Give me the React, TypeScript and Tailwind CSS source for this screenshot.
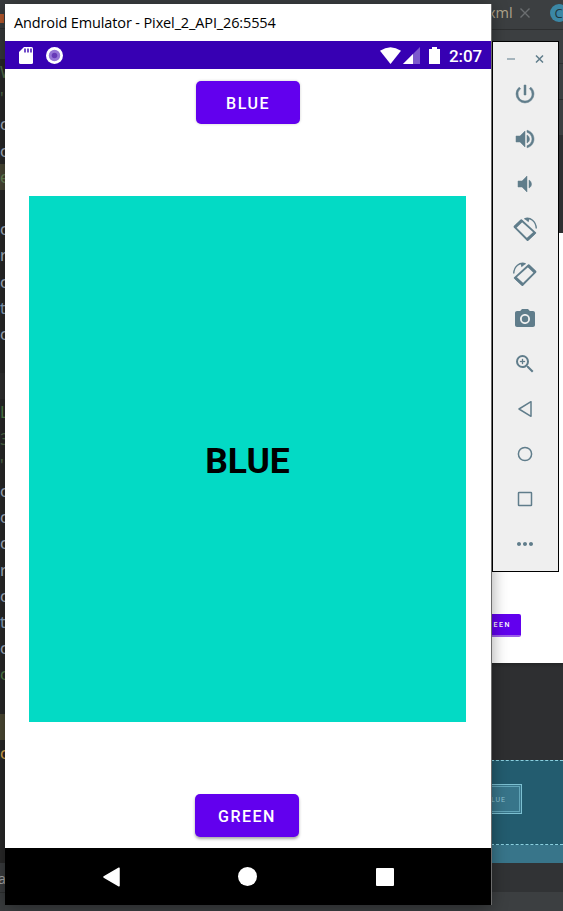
import type { ReactNode } from "react";
import {
  MdPowerSettingsNew,
  MdVolumeUp,
  MdVolumeDown,
  MdPhotoCamera,
  MdZoomIn,
  MdMoreHoriz,
} from "react-icons/md";

const codeRows: { text: string; className: string }[] = [
  { text: "W", className: "text-[#54704a]" },
  { text: "'", className: "text-[#54704a]" },
  { text: "c", className: "text-[#a9b7c6]" },
  { text: "c", className: "text-[#a9b7c6]" },
  { text: "e", className: "bg-[#4a4836] text-[#6a8759]" },
  { text: "", className: "" },
  { text: "c", className: "text-[#a9b7c6]" },
  { text: "r", className: "text-[#a9b7c6]" },
  { text: "c", className: "text-[#a9b7c6]" },
  { text: "t", className: "text-[#8fa6c0]" },
  { text: "c", className: "text-[#a9b7c6]" },
  { text: "", className: "" },
  { text: "", className: "bg-[#303030]" },
  { text: "L", className: "text-[#54804a]" },
  { text: "3", className: "text-[#54704a]" },
  { text: "'", className: "text-[#54704a]" },
  { text: "c", className: "text-[#a9b7c6]" },
  { text: "c", className: "text-[#a9b7c6]" },
  { text: "c", className: "text-[#a9b7c6]" },
  { text: "r", className: "text-[#a9b7c6]" },
  { text: "c", className: "text-[#a9b7c6]" },
  { text: "t", className: "text-[#8fa6c0]" },
  { text: "c", className: "text-[#a9b7c6]" },
  { text: "c", className: "text-[#54804a]" },
  { text: "", className: "" },
  { text: "", className: "bg-[#4d4a35]" },
  { text: "c", className: "text-[#e0b050]" },
];

function EditorGutter() {
  return (
    <div className="flex w-[5px] flex-col overflow-hidden bg-[#292929]">
      <div className="h-[29px] shrink-0 border-b border-[#2d2f30] bg-[#3a3d3f] pt-[14px]">
        <div className="h-[9px] w-[4px] bg-[#b85a2d]" />
      </div>
      <div className="h-[30px] shrink-0 bg-[#37393b]" />
      {codeRows.map((row, i) => (
        <div
          key={i}
          className={`h-[26.2px] shrink-0 font-['Noto_Sans','Liberation_Sans',sans-serif] text-[16px] leading-[26px] ${row.className}`}
        >
          {row.text}
        </div>
      ))}
      <div className="grow" />
      <div className="h-[29px] shrink-0 bg-[#3a3d3f] font-['Open_Sans',sans-serif] text-[14px] leading-[31px] text-[#aaaaaa]">
        <span className="-ml-[2px]">a</span>
      </div>
      <div className="h-[19px] shrink-0 border-t border-[#2d2f30] bg-[#3a3d3f]" />
    </div>
  );
}

function IdePanels() {
  return (
    <div className="flex w-[72px] flex-col overflow-hidden bg-[#2e2f31]">
      <div className="flex h-[30px] shrink-0 items-center border-b border-[#2d2f30] bg-[#3c3f41] pb-[3px]">
        <span className="-ml-[3px] w-[26px] font-['Open_Sans',sans-serif] text-[14.5px] leading-none text-[#b0a58d]">
          xml
        </span>
        <svg className="ml-[6px] h-[10px] w-[12px] shrink-0" viewBox="0 0 12 10" stroke="#6b6e70" strokeWidth="1.4">
          <path d="M1.5 0.5 10.5 9.5M10.5 0.5 1.5 9.5" />
        </svg>
        <div className="ml-[19px] flex size-[18px] shrink-0 items-center justify-center rounded-full bg-[#3b87a5] font-['Open_Sans',sans-serif] text-[13px] leading-none text-[#20343c]">
          C
        </div>
      </div>
      <div className="h-[34px] shrink-0 border-b border-[#2d2f30] bg-[#3c3f41]" />
      <div className="h-[36px] shrink-0 border-b border-[#2a2b2d] bg-[#3c3f41]" />
      <div className="h-[35px] shrink-0 bg-[#3c3f41]" />
      <div className="h-[98px] shrink-0 bg-[#2e2f31]" />
      <div className="h-[430px] shrink-0 bg-white pt-[381px]">
        <div className="h-[23px] w-[30px] rounded-r-[2px] border-b-2 border-[#9b5ee8] bg-[#6200ee] pr-[10px] text-right font-['Roboto',sans-serif] text-[7px] leading-[23px] font-medium tracking-[1.5px] whitespace-nowrap text-white">
          EEN
        </div>
      </div>
      <div className="h-[97px] shrink-0 bg-gradient-to-b from-[#252627] to-[#2e2f31] to-5%" />
      <div className="h-[85px] shrink-0 border-y border-dashed border-[#8bd0e0] bg-[#235c6f] pt-[23px]">
        <div className="h-[30px] w-[31px] border border-l-0 border-[#7cc0d1] bg-[#38758a] py-px pr-px">
          <div className="h-full border border-l-0 border-[#62a5b8] pr-[13px] text-right font-['Roboto',sans-serif] text-[7px] leading-[27px] tracking-[1px] text-[#8fc3d2]">
            LUE
          </div>
        </div>
      </div>
      <div className="h-[18px] shrink-0 bg-[#38758a]" />
      <div className="h-[29px] shrink-0 bg-[#313335]" />
      <div className="h-[19px] shrink-0 bg-[#3c3f41]" />
    </div>
  );
}

function StatusBar() {
  return (
    <div className="flex h-[28px] shrink-0 items-center bg-[#3700b3] text-white">
      <svg className="ml-[14px] h-[17px] w-[14px]" viewBox="0 0 14 17">
        <path fill="#fff" d="M5 0h7.5Q14 0 14 1.500V15.500Q14 17 12.500 17H1.500Q0 17 0 15.500V5Z" />
        <path stroke="#3700b3" strokeWidth="1.400" d="M6 1.500v4M9 1.500v4M12 1.500v4" />
      </svg>
      <svg className="ml-[13px] size-[17px]" viewBox="0 0 17 17">
        <circle cx="8.500" cy="8.500" r="8.500" fill="#fff" />
        <circle cx="8.500" cy="8.500" r="5.700" fill="#9575d6" />
        <circle cx="8.500" cy="8.500" r="2.800" fill="#673ab7" />
      </svg>
      <svg className="ml-auto h-[17px] w-[21px]" viewBox="0 0 21 17">
        <path fill="#fff" d="M0 3.800Q10.500-3.400 21 3.800L10.500 17Z" />
      </svg>
      <svg className="ml-[2px] h-[17px] w-[17px]" viewBox="0 0 17 17">
        <path fill="#fff" fillOpacity=".35" d="M17 0V17H0Z" />
        <path fill="#fff" d="M10 7V17H0Z" />
      </svg>
      <svg className="ml-[9px] h-[17px] w-[11px]" viewBox="0 0 11 17">
        <path fill="#fff" d="M3 0h5v2h3v15H0V2h3Z" />
      </svg>
      <span className="mr-[9px] ml-[9px] w-[33px] pt-[2px] font-['Roboto',sans-serif] text-[17px] leading-none font-medium tracking-[-0.1px] whitespace-nowrap">
        2:07
      </span>
    </div>
  );
}

function MaterialButton({ children, className }: { children: ReactNode; className: string }) {
  return (
    <button
      className={`h-[43px] w-[104px] shrink-0 rounded-[5px] bg-[#6200ee] pt-[2px] font-['Roboto',sans-serif] text-[16px] font-medium tracking-[1.5px] text-white ${className}`}
    >
      {children}
    </button>
  );
}

function EmulatorWindow() {
  return (
    <div className="absolute top-[4px] left-[5px] flex h-[901px] w-[486px] flex-col bg-white shadow-[1px_0_0_#6c6c6c,0_2px_16px_rgba(0,0,0,0.4)]">
      <div className="flex h-[37px] shrink-0 items-center pl-[9px] font-['Open_Sans','Noto_Sans',sans-serif] text-[14.5px] whitespace-nowrap text-black">
        <span className="tracking-[-0.13px]">Android Emulator - Pixel_2_API_26:5554</span>
      </div>
      <StatusBar />
      <div className="flex grow flex-col items-center">
        <MaterialButton className="mt-[12px] shadow-[0_0_3px_rgba(0,0,0,0.2)]">BLUE</MaterialButton>
        <div className="mt-[72px] ml-[24px] flex h-[526px] w-[437px] shrink-0 items-center justify-center self-start bg-[#03dac5] pt-[5px] font-['Roboto',sans-serif] text-[35.5px] font-bold text-black">
          BLUE
        </div>
        <MaterialButton className="mt-[72px] mr-[2px] shadow-[0_2px_3px_rgba(0,0,0,0.35)]">GREEN</MaterialButton>
      </div>
      <div className="flex h-[57px] shrink-0 items-center bg-black">
        <svg className="ml-[98px] h-[20px] w-[17px]" viewBox="0 0 17 20">
          <path fill="#fff" stroke="#fff" strokeWidth="1.500" strokeLinejoin="round" d="M16 1.200V18.800L1 10Z" />
        </svg>
        <div className="ml-[118px] size-[19px] rounded-full bg-white" />
        <div className="ml-[119px] size-[18px] rounded-[1px] bg-white" />
      </div>
    </div>
  );
}

function RotateIcon({ flip }: { flip?: boolean }) {
  return (
    <svg width="24" height="24" viewBox="0 0 24 24" fill="none" stroke="currentColor" className={flip ? "-scale-x-100" : ""}>
      <path strokeWidth="1.900" strokeLinejoin="round" d="M8.300 3.200 22.200 15.900 14.600 23 1.500 9.800Z" />
      <path strokeWidth="2.800" strokeLinecap="round" d="M8.300 4.300 2.600 9.800M21 16.200 14.700 22" />
      <path strokeWidth="1.400" d="M11.500 1.800C17.500-.1 23 4.200 23.300 11.500" />
      <path fill="currentColor" stroke="none" d="M11 1.500 15.500 5.300 16.500 1.300Z" />
    </svg>
  );
}

function OutlineIcon({ children }: { children: ReactNode }) {
  return (
    <svg width="24" height="24" viewBox="0 0 24 24" fill="none" stroke="currentColor" strokeWidth="1.500" strokeLinejoin="round">
      {children}
    </svg>
  );
}

function EmulatorToolbar() {
  return (
    <div className="absolute top-[41px] left-[492px] flex h-[531px] w-[67px] flex-col items-center border border-black bg-[#efefef] text-[#607d8b]">
      <div className="flex h-[29px] w-full shrink-0 items-center pt-[5px] pl-[14px]">
        <div className="h-[2px] w-[8px] bg-[#a5b4bc]" />
        <svg className="ml-[19.5px] h-[8px] w-[9px]" viewBox="0 0 9 8" stroke="currentColor" strokeWidth="1.500">
          <path d="M1 .5 8 7.500M8 .5 1 7.500" />
        </svg>
      </div>
      <div className="mt-[11px] mr-px flex flex-col gap-[21px]">
        <MdPowerSettingsNew size={24} className="[&>path:last-child]:stroke-[0.5px]" />
        <MdVolumeUp size={24} className="[&>path:last-child]:stroke-[0.5px]" />
        <MdVolumeDown size={24} className="[&>path:last-child]:stroke-[0.5px]" />
        <RotateIcon />
        <RotateIcon flip />
        <MdPhotoCamera size={24} />
        <MdZoomIn size={24} className="[&>path:last-child]:stroke-[0.3px]" />
        <OutlineIcon>
          <path d="M18 4.700V19.300L6 12Z" />
        </OutlineIcon>
        <OutlineIcon>
          <circle cx="12" cy="12" r="6.600" />
        </OutlineIcon>
        <OutlineIcon>
          <rect x="5.500" y="5.500" width="13" height="13" rx=".6" />
        </OutlineIcon>
        <MdMoreHoriz size={24} />
      </div>
    </div>
  );
}

export default function App() {
  return (
    <div className="relative h-[911px] w-[563px] overflow-hidden bg-[#3c3f41]">
      <div className="flex h-full justify-between">
        <EditorGutter />
        <IdePanels />
      </div>
      <EmulatorWindow />
      <EmulatorToolbar />
    </div>
  );
}
